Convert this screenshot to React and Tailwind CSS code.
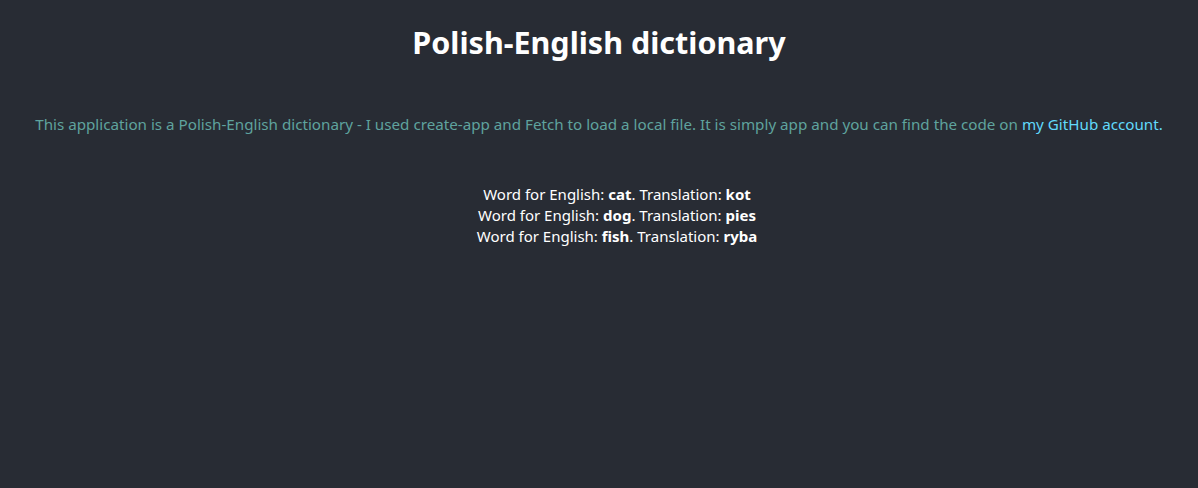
import React from 'react';

const words = [
    { en: 'cat', pl: 'kot' },
    { en: 'dog', pl: 'pies' },
    { en: 'fish', pl: 'ryba' },
];

const App = () => {
    return (
        <div className="min-h-[488px] bg-[#282c34] text-white text-center font-['Noto_Sans',sans-serif]">
            <h1 className="pt-[21px] text-[30.5px] font-bold leading-[42px]">Polish-English dictionary</h1>
            <p className="mt-[51px] text-[15.2px] leading-[20px] text-[#5fa39e]">
                This application is a Polish-English dictionary - I used create-app and Fetch to load a local file. It is simply app and you can find the code on{' '}
                <a href="#" className="text-[#61dafb]">my GitHub account.</a>
            </p>
            <ul className="mt-[50px] pl-9 text-[15px] leading-[21px]">
                {words.map((w) => (
                    <li key={w.en}>
                        Word for English: <b>{w.en}</b>. Translation: <b>{w.pl}</b>
                    </li>
                ))}
            </ul>
        </div>
    );
};

export default App;
